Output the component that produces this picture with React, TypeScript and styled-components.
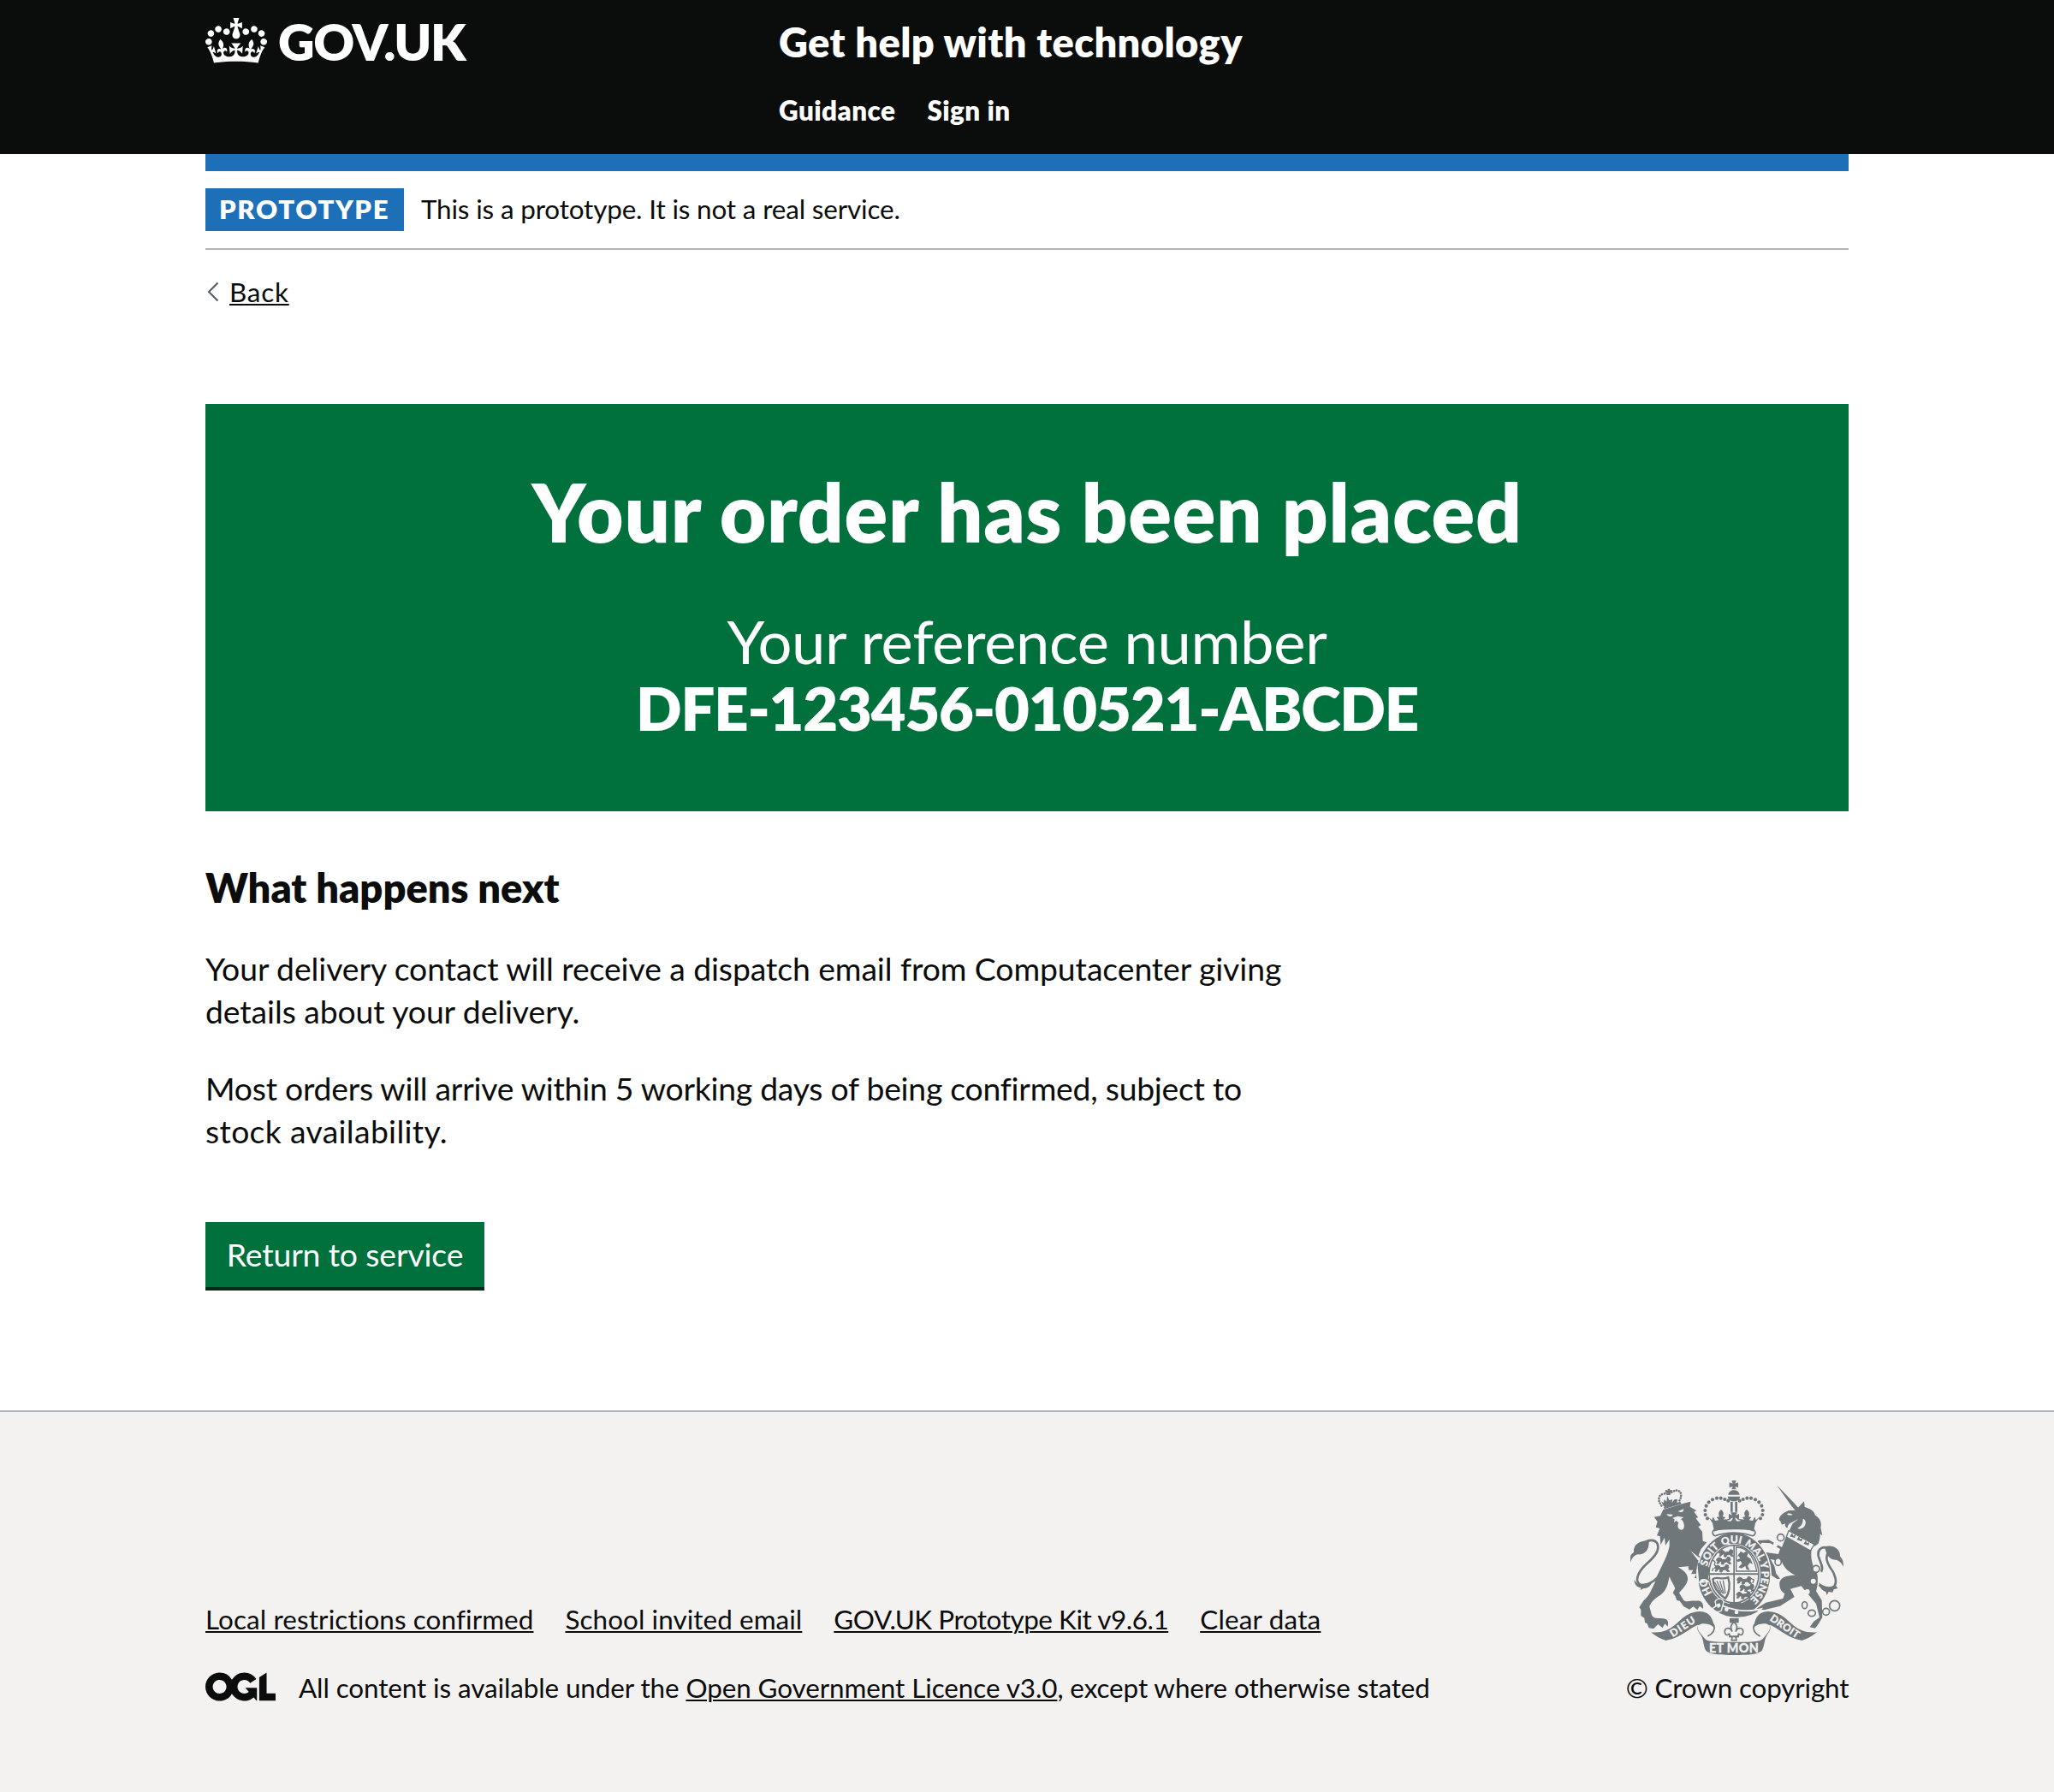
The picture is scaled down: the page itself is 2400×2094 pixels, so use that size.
import React from "react";
import styled, { createGlobalStyle } from "styled-components";

const ink = "#0b0c0c";
const blue = "#1d70b8";
const green = "#00703c";
const grey = "#b1b4b6";
const paper = "#f3f2f1";
const crest = "#6f777b";

const GlobalStyle = createGlobalStyle`
  *, *::before, *::after { box-sizing: border-box; }
  body {
    margin: 0;
    background: ${paper};
    color: ${ink};
    font-family: Lato, "Noto Sans", sans-serif;
    font-size: 37.3px;
    line-height: 50px;
    font-variant-ligatures: none;
  }
  h1, h2, p, ul { margin: 0; padding: 0; font-weight: 400; }
`;

const Page = styled.div`
  display: flex;
  flex-direction: column;
  min-height: 2094px;
  background: #fff;
`;

const Container = styled.div`
  width: 1920px;
  margin: 0 auto;
`;

const Header = styled.header`
  height: 180px;
  background: ${ink};
  color: #fff;
`;

const HeaderGrid = styled(Container)`
  display: grid;
  grid-template-columns: 670px 1fr;
  padding-top: 19px;
`;

const Logo = styled.a`
  display: flex;
  align-items: flex-start;
  height: 60px;
  color: #fff;
  svg { margin-top: 2px; }
`;

const LogoText = styled.span`
  margin-left: 13px;
  font-size: 59px;
  font-weight: 800;
  line-height: 60px;
  letter-spacing: -1.3px;
`;

const ServiceName = styled.div`
  font-size: 47px;
  font-weight: 800;
  line-height: 60px;
  letter-spacing: 0.4px;
`;

const Nav = styled.nav`
  display: flex;
  gap: 37px;
  margin-top: 25px;
  font-size: 31.4px;
  font-weight: 800;
  letter-spacing: 0.45px;
`;

const BlueBar = styled(Container)`
  height: 20px;
  background: ${blue};
`;

const Phase = styled(Container)`
  display: flex;
  gap: 20px;
  height: 92px;
  padding: 20px 0;
  border-bottom: 2px solid ${grey};
  font-size: 31.4px;
  line-height: 49px;
`;

const Tag = styled.strong`
  width: 232px;
  height: 50px;
  padding-left: 16px;
  background: ${blue};
  color: #fff;
  font-size: 31px;
  font-weight: 800;
  letter-spacing: 1.6px;
`;

const PhaseText = styled.span`
  letter-spacing: -0.15px;
`;

const Back = styled.a`
  display: inline-flex;
  align-items: center;
  gap: 12px;
  height: 40px;
  margin-top: 29px;
  padding-left: 2px;
  font-size: 31.4px;
  line-height: 39px;
`;

const Tracked = styled.span<{ $ls: number }>`
  letter-spacing: ${(p) => p.$ls}px;
`;

const Underlined = styled(Tracked)`
  text-decoration: underline;
  text-decoration-thickness: 2px;
  text-underline-offset: 2px;
`;

const Main = styled(Container)`
  display: flex;
  flex-direction: column;
  align-items: flex-start;
`;

const Panel = styled.section`
  width: 100%;
  height: 476px;
  margin-top: 111px;
  padding-top: 73px;
  background: ${green};
  color: #fff;
  text-align: center;
`;

const PanelTitle = styled.h1`
  font-size: 94px;
  font-weight: 800;
  line-height: 105px;
  letter-spacing: 0.7px;
`;

const PanelBody = styled.div<{ $bold?: boolean; $ls: number }>`
  font-size: 70.5px;
  font-weight: ${(p) => (p.$bold ? 800 : 400)};
  line-height: 78px;
  letter-spacing: ${(p) => p.$ls}px;
`;

const PanelDetails = styled.div`
  margin-top: 60px;
`;

const Subheading = styled.h2`
  margin-top: 59px;
  font-size: 47px;
  font-weight: 800;
  line-height: 60px;
`;

const Paragraph = styled.p<{ $ls: number }>`
  width: 1270px;
  margin-top: 40px;
  letter-spacing: ${(p) => p.$ls}px;
`;

const Button = styled.a`
  height: 76px;
  width: 326px;
  margin-top: 81px;
  padding-top: 13px;
  background: ${green};
  box-shadow: 0 4px 0 #002d18;
  color: #fff;
  text-align: center;
  letter-spacing: -0.12px;
`;

const Footer = styled.footer`
  flex: 1;
  margin-top: 144px;
  border-top: 2px solid ${grey};
  background: ${paper};
  font-size: 31.4px;
`;

const FooterMeta = styled(Container)`
  display: flex;
  justify-content: space-between;
  align-items: flex-end;
  padding-top: 80px;
`;

const FooterLinks = styled.ul`
  display: flex;
  gap: 37px;
  margin-bottom: 30px;
  list-style: none;
`;

const Licence = styled.div`
  display: flex;
  align-items: flex-start;
  gap: 27px;
  svg { margin-top: 7px; }
`;

const Copyright = styled.div`
  display: flex;
  flex-direction: column;
  align-items: center;
  width: 260px;
  gap: 13px;
  white-space: nowrap;
`;

function CrownIcon() {
  return (
    <svg width="72" height="53" viewBox="0 0 132 97" fill="#fff">
      <path d="M25 30.2c3.5 1.5 7.7-.2 9.1-3.7 1.5-3.6-.2-7.8-3.9-9.2-3.6-1.4-7.6.3-9.1 3.9-1.4 3.5.3 7.5 3.9 9zM9 39.5c3.6 1.5 7.8-.2 9.2-3.7 1.5-3.6-.2-7.8-3.9-9.1-3.6-1.5-7.6.2-9.1 3.8-1.4 3.5.3 7.5 3.8 9zM4.4 57.2c3.5 1.5 7.7-.2 9.1-3.8 1.5-3.6-.2-7.7-3.9-9.1-3.5-1.5-7.6.3-9.1 3.8-1.4 3.5.3 7.6 3.9 9.1zm38.3-21.4c3.5 1.5 7.7-.2 9.1-3.8 1.5-3.6-.2-7.7-3.9-9.1-3.6-1.5-7.6.3-9.1 3.8-1.3 3.6.4 7.7 3.9 9.1zm64.4-5.6c-3.6 1.5-7.8-.2-9.1-3.7-1.5-3.6.2-7.8 3.8-9.2 3.6-1.4 7.7.3 9.2 3.9 1.3 3.5-.4 7.5-3.9 9zm15.9 9.3c-3.6 1.5-7.7-.2-9.1-3.7-1.5-3.6.2-7.8 3.7-9.1 3.6-1.5 7.7.2 9.2 3.8 1.5 3.5-.3 7.5-3.8 9zm4.7 17.7c-3.6 1.5-7.8-.2-9.2-3.8-1.5-3.6.2-7.7 3.9-9.1 3.6-1.5 7.7.3 9.2 3.8 1.3 3.5-.4 7.6-3.9 9.1zM89.3 35.8c-3.6 1.5-7.8-.2-9.2-3.8-1.4-3.6.2-7.7 3.9-9.1 3.6-1.5 7.7.3 9.2 3.8 1.4 3.6-.3 7.7-3.9 9.1zM69.7 17.7l8.9 4.7V9.3l-8.9 2.8c-.2-.3-.5-.6-.9-.9L72.4 0H59.6l3.5 11.2c-.3.3-.6.5-.9.9l-8.8-2.8v13.1l8.8-4.7c.3.3.6.7.9.9l-5 15.4v.1c-.2.8-.4 1.6-.4 2.4 0 4.1 3.1 7.5 7 8.1h.2c.3 0 .7.1 1 .1.4 0 .7 0 1-.1h.2c4-.6 7.1-4.1 7.1-8.1 0-.8-.1-1.7-.4-2.4V34l-5.1-15.4c.4-.2.7-.6 1-.9zM66 92.8c16.9 0 32.8 1.1 47.1 3.2 4-16.9 8.9-26.7 14-33.5l-9.6-3.4c1 4.9 1.1 7.2 0 10.2-1.5-1.4-3-4.3-4.2-8.7L108.6 76c2.8-2 5-3.2 7.5-3.3-4.4 9.4-10 11.9-13.6 11.2-4.3-.8-6.3-4.6-5.6-7.9 1-4.7 5.7-5.9 8-.5 4.3-8.7-3-11.4-7.6-8.8 7.1-7.2 7.9-13.5 2.1-21.1-8 6.1-8.1 12.3-4.5 20.8-4.7-5.4-12.1-2.5-9.5 6.2 3.4-5.2 7.9-2 7.2 3.1-.6 4.3-6.4 7.8-13.5 7.2-10.3-.9-10.9-8-11.2-13.8 2.5-.5 7.1 1.8 11 7.3L80.2 60c-4.1 4.4-8 5.3-12.3 5.4 1.4-4.4 8-11.6 8-11.6H55.5s6.4 7.2 7.9 11.6c-4.2-.1-8-1-12.3-5.4l1.4 16.4c3.9-5.5 8.5-7.7 10.9-7.3-.3 5.8-.9 12.8-11.1 13.8-7.2.6-12.9-2.9-13.5-7.2-.7-5 3.8-8.3 7.1-3.1 2.7-8.7-4.6-11.6-9.4-6.2 3.7-8.5 3.6-14.7-4.6-20.8-5.8 7.6-5 13.9 2.2 21.1-4.7-2.6-11.9.1-7.7 8.8 2.3-5.5 7.1-4.2 8.1.5.7 3.3-1.3 7.1-5.7 7.9-3.5.7-9-1.8-13.5-11.2 2.5.1 4.7 1.3 7.5 3.3l-4.7-15.4c-1.2 4.4-2.7 7.2-4.3 8.7-1.1-3-.9-5.3 0-10.2l-9.5 3.4c5 6.9 9.9 16.7 14 33.5 14.8-2.1 30.8-3.2 47.7-3.2z" />
    </svg>
  );
}

function OglLogo() {
  return (
    <svg width="82" height="34" viewBox="0 0 483.2 195.7" fill={ink}>
      <path d="M421.5 142.8V.1l-50.7 32.3v161.1h112.4v-50.7zm-122.3-9.6A47.12 47.12 0 0 1 221 97.8c0-26 21.1-47.1 47.1-47.1 16.7 0 31.4 8.7 39.7 21.8l42.7-27.2A97.63 97.63 0 0 0 268.1 0c-36.5 0-68.3 20.1-85.1 49.7A98 98 0 0 0 97.8 0C43.9 0 0 43.9 0 97.8s43.9 97.8 97.8 97.8c36.5 0 68.3-20.1 85.1-49.7a97.76 97.76 0 0 0 149.6 25.4l19.4 22.2h3v-87.8h-80l24.3 27.5zM97.8 145c-26 0-47.1-21.1-47.1-47.1s21.1-47.1 47.1-47.1 47.1 21.1 47.1 47.1S123.8 145 97.8 145" />
    </svg>
  );
}

const arch: [number, number][] = [
  [345, 193], [338, 180], [337, 165], [341, 149], [350, 136], [363, 127], [378, 122], [392, 122], [406, 126], [418, 131],
];

const mottoWords: [string, string][] = [
  ["HO", "18.5%"],
  ["SOIT", "35.3%"],
  ["QUI", "48.7%"],
  ["MAL", "61.8%"],
  ["Y", "70.6%"],
  ["PENSE", "82%"],
];

function SmallLion({ x, y }: { x: number; y: number }) {
  return (
    <path
      transform={`translate(${x} ${y})`}
      strokeWidth="3"
      d="M-2 4l8-5 7 3 5 5 14-2 4-8 8 2 2 8-4 6 6 8h-8l-6-7-10 2-2 7-8-1 2-7-6-3-6 8h-6l4-9-5-1z"
    />
  );
}

function HalfCrown() {
  return (
    <g>
      {arch.map(([cx, cy]) => (
        <circle key={`${cx}-${cy}`} cx={cx} cy={cy} r="6.2" />
      ))}
      <path d="M349 188l12 11 4-12 7 14 13-2-8-10 10-3c-6-10-1-18 6-24 8 7 12 14 5 24l10 3-6 8 12-1 12-2h13v36c-28-2-50 0-70 9l-6-30z" />
    </g>
  );
}

function HalfRibbon() {
  return (
    <g>
      <path d="M147 592c18 2 38 0 52-6 42-18 58-56 101-65 40-7 58 9 66 39l6 20c-10-14-26-20-46-18-40 8-66 48-126 59-16-4-34-14-53-29z" />
      <path d="M312 566c18-14 44-14 56 2 6 20-6 30-22 38" fill="none" stroke={crest} strokeWidth="5" />
      <path d="M312 566c-4 16 4 24 14 36 10 12 10 14 22 20 26 5 60 5 91 4v46c-44 0-78 0-98-14-10-12-8-36-18-54-8-14-18-22-11-38z" />
      <path d="M326 570c16-8 36-4 36 6-2 12-14 16-22 24-10-8-16-16-14-30z" fill={paper} />
    </g>
  );
}

function RoyalCrest() {
  return (
    <svg width="250" height="204" viewBox="75 60 750 612" fill={crest}>
      <defs>
        <path id="motto" d="M438 497A97 109 0 0 1 438 279A97 109 0 0 1 438 497" />
      </defs>

      {/* lion */}
      <path d="M190 162l72-22 24-6-2 18 23 14-9 4 15 20-9 1 18 26-9 5 14 18 2 32 14 5-20 23-9 22 26 20 12 28-4 30 4 14-12-9 2 15-16-10-10 8-4-14-12-2 6-15-18 1 7-14-15 0-2-13-36 3c20 10 36 25 34 43-2 19-20 34-30 47l16 26c8 8 28 0 43 2 20-2 27 8 25 28l-12-10-8 14-14-12-14 10-20-10-14-20-10-2-6-16-8-10 8-16c-6-16-16-28-20-41-6 25-7 45-32 65-20 12-34 25-38 40l8 30c8 15 22 10 36 12 19 0 24 10 20 28l-10-10-8 15-16-13-16 16-16-3-6-15-8-4-2-16-12-8V512l-6-7 16-25c18-12 28-40 38-60 12-45 42-80 52-130l0-24-14 22-3-28-14 26-2-30-11-3 10-25-14-4 6-20-12-16 22-4z" />
      <path d="M188 378c-20 28-40 48-76 48-22-8-16-40 18-72 34-30 48-50 40-72-8-16-32-16-48-2" fill="none" stroke={crest} strokeWidth="8" />
      <path d="M140 272c2 30-14 50-38 47-14 2-22 12-29 34 0-24 2-34 14-42-2-20 14-42 53-39z" />
      <path d="M88 408l12 14c20 6 40-2 52-8-6 20-20 24-30 24l-12 6 2-8c-16-2-22-12-24-28z" />
      <g fill={paper}>
        <path d="M202 178l22 1c-4 10-16 9-22-1zM242 168l20-8c0 11-8 14-20 8z" />
        <path d="M222 192l18-7 22 4-10 7c14 8 16 37 2 37-12 0-16-13-10-25l-8-7-8 6 2-11z" />
        <path d="M286 306l32 26 12 16-18-8z" />
      </g>
      <path d="M192 154l58-20 4 8-60 18z" />
      <path d="M190 148l-6-14 8 4 2-12 8 8 2-20 8 16 10-4-1 12 9-12 10 0-2 14-42 14z" />
      <path
        d="M184 148c-14-20-12-38 10-42l16 2c18-16 38-18 42-2 2 10 0 16-6 26"
        fill="none"
        stroke={crest}
        strokeWidth="8"
        strokeDasharray="0.1 9"
        strokeLinecap="round"
      />
      <path d="M198 92l8 3 0-6 8 0-1 5 8-1 1 8-8 0 2 8-10 2-1-8-8 1z" />

      {/* unicorn */}
      <path d="M588 76l60 62 18 20-14 6-16-20z" />
      <path d="M652 164l12-10 20-21 2 20c20 6 34 14 36 28 20 12 24 30 20 44l6 28-8-6c0 14-2 22-6 34l-12 9-90-55 12-24 20-16-24 12c-12 6-14 14-14 20-8-2-10-10-8-16l-12 4-6-14-4-2c2-20 18-26 34-34z" />
      <path d="M624 177c8-3 16 0 20 3-8 3-16 2-20-3zM680 194c10 2 14 18 2 30-8 6-14 6-22 4 16-8 20-18 20-34z" fill={paper} />
      <path d="M626 244l84 58c-4 30 2 56 20 86 4 22 0 50-4 60l20 32 2 60c-10 16-16 30-26 38l-18-4 14-20 20-14-12-48-22-26-30-36-38 10 14 28-50 32-56 14-28-4 34-22 60-14 6-18c-12-6-20-20-18-40 6-18 26-24 56-24-26-12-40-26-48-48l-40-8 14 24 6 26 14 18-10 2-30-20-4-28-14-20 8-14-20 8-8-12 12-10 60 8 6-18-34-20-30-2-8 10-14-4 10-14 36-2 46 26z" />
      <path d="M630 236l90 48-14 22-84-48z" fill={paper} stroke={crest} strokeWidth="4" />
      <path d="M634 256l8-12 4 10 8-4-2 12zM658 268l8-12 4 10 8-4-2 12zM682 282l8-12 4 10 8-4-2 12z" />
      <path d="M744 380c10-14-4-34-10-56-4-28 24-40 40-18-16 18-14 34 2 60 18 22 24 50 14 64-14 16-38 8-54-4" fill="none" stroke={crest} strokeWidth="8" />
      <path d="M756 292c32-10 56 10 54 34 10 10 12 20 12 36-8-16-18-22-26-24-24 2-34-18-40-46z" />
      <path d="M736 418c16 14 36 20 58 8l8 12-14 4-4 10-14-2-6 12-4-12c-14-4-22-14-24-32z" />
      <g fill={paper}>
        <circle cx="716" cy="413" r="9" />
        <circle cx="695" cy="450" r="9" />
        <circle cx="584" cy="284" r="8" />
      </g>
      <g fill="none" stroke={crest} strokeWidth="5">
        <circle cx="602" cy="260" r="12" />
        <ellipse cx="593" cy="345" rx="11" ry="13" fill={paper} />
        <circle cx="726" cy="370" r="12" fill={paper} />
        <ellipse cx="686" cy="497" rx="9" ry="12" />
        <ellipse cx="711" cy="525" rx="13" ry="11" />
        <circle cx="761" cy="520" r="12" />
        <circle cx="791" cy="499" r="18" />
      </g>

      {/* garter and shield */}
      <ellipse cx="438" cy="390" rx="132" ry="150" fill={paper} />
      <ellipse cx="438" cy="390" rx="127" ry="146" />
      <ellipse cx="438" cy="388" rx="93" ry="106" fill={paper} />
      <ellipse cx="438" cy="388" rx="87" ry="101" fill="none" stroke={crest} strokeWidth="5" />
      <path d="M436 286h5v210h-5zM352 385h172v6H352zM424 486h38l4 14h-44z" />
      <path d="M446 294c34 0 62 26 72 84h-72z" fill="none" stroke={crest} strokeWidth="4" />
      <path d="M462 308l10 6 8-6 8 6-4 12 12 8 8 20-10-6-8 12 8 14-12-2-4-12-14 8-10-4 12-12-4-10-10 4-6-8 14-4-6-10-6 4z" />
      <g stroke={crest} strokeLinejoin="round">
        <SmallLion x={389} y={305} />
        <SmallLion x={380} y={331} />
        <SmallLion x={374} y={358} />
        <SmallLion x={452} y={400} />
        <SmallLion x={462} y={426} />
        <SmallLion x={450} y={452} />
        <path d="M364 338l8 8-2 10 6 6M496 402l12 6-4 12M366 366l-4 12M498 450l6-10" fill="none" strokeWidth="4" />
      </g>
      <path d="M364 406c12-12 28 4 54-6 8 26 4 56-10 74-20-14-42-34-44-68z" fill={paper} stroke={crest} strokeWidth="7" />
      <path d="M378 412l20 44M389 412l14 46M400 410l8 46M370 416l22 38" stroke={crest} strokeWidth="4" />
      <path d="M306 372l44 20 0 24-38 4z" fill={paper} />
      <path d="M310 350l30-8 12 28-4 30 4 14-12-9 2 13-16-10-10 10z" />
      <g
        fill={paper}
        stroke={paper}
        strokeWidth="0.8"
        fontFamily="Lato, sans-serif"
        fontWeight="900"
        fontSize="36"
        textAnchor="middle"
      >
        {mottoWords.map(([word, offset]) => (
          <text key={word}>
            <textPath href="#motto" startOffset={offset}>
              {word}
            </textPath>
          </text>
        ))}
      </g>
      <path d="M376 486c34 24 88 36 140 28l18-4c-34 36-112 44-162 8z" stroke={paper} strokeWidth="5" />
      <path d="M372 484c8-14 26-12 30 2l-8 30c-12 8-26 4-30-8l12-8z" stroke={paper} strokeWidth="4" />
      <path d="M376 494l12-4 4 10-10 8z" fill={paper} />
      <circle cx="412" cy="512" r="7" fill={paper} />
      <circle cx="447" cy="522" r="7" fill={paper} />

      {/* crown */}
      <path
        d="M372 254c-12-4-12-22 4-22 40-4 84-4 124 0 16 0 16 18 4 22-40-14-92-14-132 0z"
        fill={paper}
        stroke={crest}
        strokeWidth="5"
      />
      <HalfCrown />
      <g transform="translate(876 0) scale(-1 1)">
        <HalfCrown />
      </g>
      <path d="M430 60h16l-4 11 11-4v18l-11-4 4 10h-16l4-10-12 4V67l12 4zM418 110c2-22 38-22 40 0zM416 116h44c-4 22-40 22-44 0zM426 134h8v36h-8zM442 134h8v36h-8zM426 172h24l-6 10 12-5v20l-12-6 4 10h-20l4-10-12 6v-20l12 5z" />
      <path d="M412 201c8-2 16-4 22-12 0 8-4 12-8 14zM464 201c-8-2-16-4-22-12 0 8 4 12 8 14z" fill={paper} />

      {/* pendant fleur-de-lis */}
      <path d="M423 543h32v16h-32z" />
      <path d="M438 556c-14 12-12 20-6 34-8-18-28-14-26 2 2 12 12 12 16 4 0 8 6 12 10 12l-2 12h17l-3-12c6 0 10-4 10-12 4 8 14 8 16-4 2-16-18-20-26-2 6-14 8-22-6-34z" fill={paper} stroke={crest} strokeWidth="5" />
      <path d="M420 604h36v6h-36z" />

      {/* ribbons */}
      <HalfRibbon />
      <g transform="translate(876 0) scale(-1 1)">
        <HalfRibbon />
      </g>
      <g
        fill={paper}
        stroke={paper}
        strokeWidth="0.8"
        fontFamily="Lato, sans-serif"
        fontWeight="900"
        textAnchor="middle"
      >
        <text fontSize="36" letterSpacing="4" transform="translate(266 582) rotate(-33)">DIEU</text>
        <text fontSize="36" letterSpacing="1" transform="translate(610 582) rotate(34)">DROIT</text>
        <text fontSize="43" letterSpacing="1" x="438" y="664">ET MON</text>
      </g>
    </svg>
  );
}

export default function App() {
  return (
    <Page>
      <GlobalStyle />
      <Header>
        <HeaderGrid>
          <Logo>
            <CrownIcon />
            <LogoText>GOV.UK</LogoText>
          </Logo>
          <div>
            <ServiceName>Get help with technology</ServiceName>
            <Nav>
              <span>Guidance</span>
              <span>Sign in</span>
            </Nav>
          </div>
        </HeaderGrid>
      </Header>
      <BlueBar />
      <Phase>
        <Tag>PROTOTYPE</Tag>
        <PhaseText>This is a prototype. It is not a real service.</PhaseText>
      </Phase>
      <Main>
        <Back>
          <svg width="14" height="24" viewBox="0 0 14 24" fill="none" stroke="#505a5f" strokeWidth="2">
            <path d="M12.5 1.5L2 12l10.5 10.5" />
          </svg>
          <Underlined $ls={0.8}>Back</Underlined>
        </Back>
        <Panel>
          <PanelTitle>Your order has been placed</PanelTitle>
          <PanelDetails>
            <PanelBody $ls={-0.32}>Your reference number</PanelBody>
            <PanelBody $bold $ls={-1.19}>DFE-123456-010521-ABCDE</PanelBody>
          </PanelDetails>
        </Panel>
        <Subheading>What happens next</Subheading>
        <Paragraph $ls={-0.07}>
          Your delivery contact will receive a dispatch email from Computacenter giving details about your delivery.
        </Paragraph>
        <Paragraph $ls={-0.24}>
          Most orders will arrive within 5 working days of being confirmed, subject to{" "}
          <Tracked $ls={0.35}>stock availability.</Tracked>
        </Paragraph>
        <Button>Return to service</Button>
      </Main>
      <Footer>
        <FooterMeta>
          <div>
            <FooterLinks>
              <li><Underlined $ls={0.11}>Local restrictions confirmed</Underlined></li>
              <li><Underlined $ls={0.08}>School invited email</Underlined></li>
              <li><Underlined $ls={-0.44}>GOV.UK Prototype Kit v9.6.1</Underlined></li>
              <li><Underlined $ls={0.2}>Clear data</Underlined></li>
            </FooterLinks>
            <Licence>
              <OglLogo />
              <Tracked $ls={-0.09}>
                All content is available under the <Underlined $ls={-0.07}>Open Government Licence v3.0</Underlined>,
                except where otherwise stated
              </Tracked>
            </Licence>
          </div>
          <Copyright>
            <RoyalCrest />
            <Tracked $ls={-0.15}>© Crown copyright</Tracked>
          </Copyright>
        </FooterMeta>
      </Footer>
    </Page>
  );
}
